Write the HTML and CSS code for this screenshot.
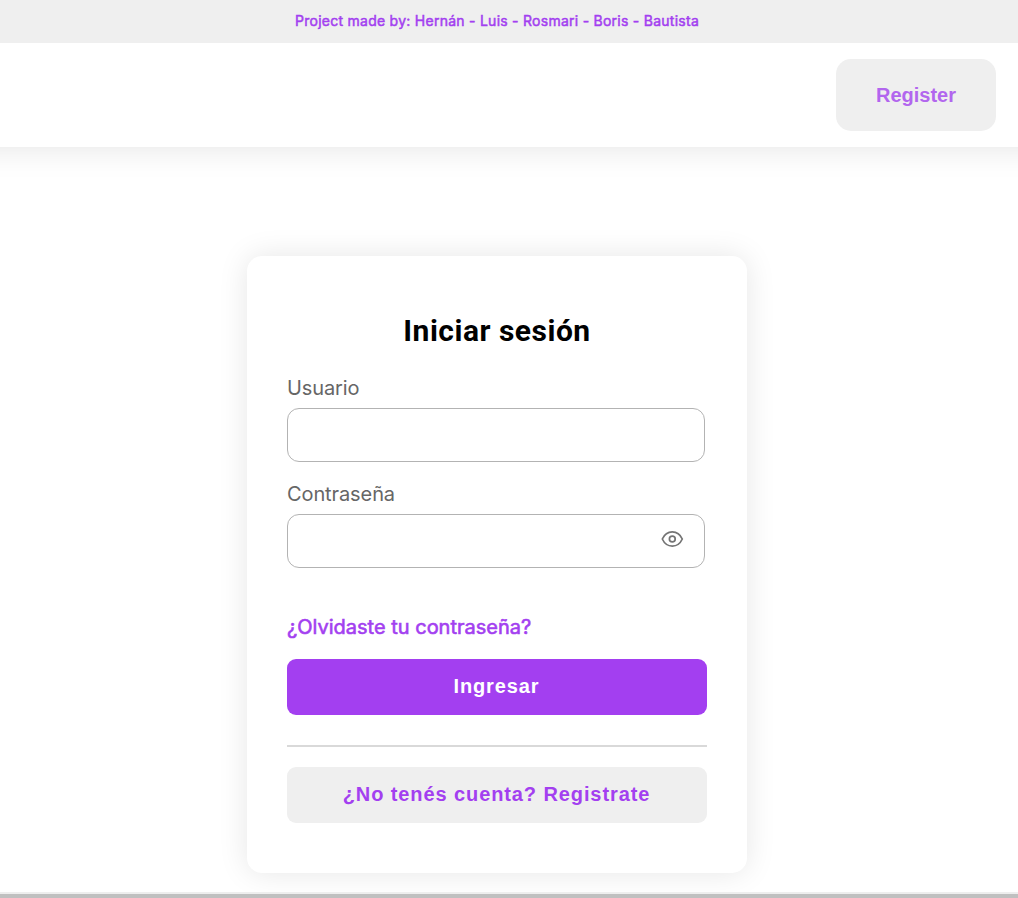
FILE: index.html
```
<!DOCTYPE html>
<html lang="es">
<head>
<meta charset="utf-8">
<title>Iniciar sesión</title>
<link rel="stylesheet" href="styles.css">
</head>
<body>
<div class="banner"><p class="banner-text">Project made by: Hernán - Luis - Rosmari - Boris - Bautista</p></div>
<header class="header"><button class="register">Register</button></header>
<main class="main">
  <form class="card">
    <h1 class="title">Iniciar sesión</h1>
    <label class="label" for="user">Usuario</label>
    <input class="field" id="user" type="text">
    <label class="label" for="pass">Contraseña</label>
    <div class="password">
      <input class="field" id="pass" type="password">
      <svg class="eye" width="23" height="16" viewBox="0 0 23 16" fill="none" stroke="#747474" stroke-width="1.7"><path d="M1.300 8C3.500 3.200 7 .9 11.300 .9S19.100 3.200 21.300 8C19.100 12.800 15.600 15.100 11.300 15.100S3.500 12.800 1.300 8Z"/><circle cx="11.300" cy="8" r="2.900"/></svg>
    </div>
    <a class="forgot"><span>¿Olvidaste tu contraseña?</span></a>
    <button class="button primary" type="button">Ingresar</button>
    <div class="divider"></div>
    <button class="button secondary" type="button">¿No tenés cuenta? Registrate</button>
  </form>
</main>
<footer class="footer"></footer>
</body>
</html>
```
FILE: styles.css
```
* { box-sizing: border-box; }
body { margin: 0; height: 898px; overflow: hidden; display: flex; flex-direction: column; background: #fff; font-family: Inter, sans-serif; }
.banner { height: 43px; flex: none; background: #efefef; padding-right: 24px; text-align: center; }
.banner-text { margin: 0; font-size: 14px; line-height: 41px; letter-spacing: .26px; color: #a33ff0; -webkit-text-stroke: .5px #a33ff0; }
.header { height: 104px; flex: none; display: flex; justify-content: flex-end; align-items: center; margin: 0 -40px; padding-right: 62px; background: #fff; box-shadow: 0 2px 30px rgba(0,0,0,.1); clip-path: inset(0 0 -40px 0); }
.register { width: 160px; height: 72px; border: 0; border-radius: 15px; padding: 0; background: #efefef; color: #b266ee; font: bold 20px "Liberation Sans", sans-serif; letter-spacing: -.03px; }
.main { flex: 1; padding: 109px 24px 0 0; display: flex; justify-content: center; align-items: flex-start; }
.card { width: 500px; height: 617px; padding: 55px 40px 50px; border-radius: 15px; background: #fff; box-shadow: 0 0 30px rgba(0,0,0,.1); display: flex; flex-direction: column; }
.title { margin: 0 0 21px; text-align: center; font: bold 30px/40px Roboto, sans-serif; letter-spacing: .5px; }
.label { font-size: 20px; line-height: 32px; margin-bottom: 4px; color: #666; letter-spacing: -.1px; }
.field { width: 418px; height: 54px; flex: none; display: block; border: 1px solid #b3b3b3; border-radius: 12px; background: #fff; margin-bottom: 16px; padding: 0 16px; }
.password { position: relative; width: 418px; }
.password .field { margin: 0; }
.eye { position: absolute; right: 21px; top: 17px; }
.forgot { margin-top: 44px; font-size: 20px; line-height: 30px; color: #a33ff0; -webkit-text-stroke: .6px #a33ff0; }
.button { height: 56px; flex: none; padding: 0 1px 2px 0; border: 0; border-radius: 9px; font: bold 20px "Liberation Sans", sans-serif; letter-spacing: .9px; }
.primary { margin-top: 17px; background: #a33ff0; color: #fff; }
.divider { height: 2px; flex: none; margin: 30px 0 20px; background: #d9d9d9; }
.secondary { background: #efefef; color: #a33ff0; }
.footer { height: 6px; flex: none; background: #c0c0c0; border-top: 2px solid #eee; }
```
